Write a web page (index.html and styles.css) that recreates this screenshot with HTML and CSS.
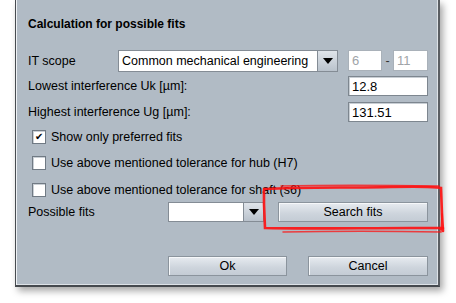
FILE: index.html
```html
<!DOCTYPE html>
<html lang="en">
<head>
    <meta charset="UTF-8">
    <meta name="viewport" content="width=device-width, initial-scale=1.0">
    <title>Calculation for possible fits</title>
    <link rel="stylesheet" href="styles.css">
</head>
<body>
    <div class="dialog">
        <div class="title">Calculation for possible fits</div>

        <div class="row scope-row">
            <span class="label scope-label">IT scope</span>
            <div class="combo scope-combo">
                <span class="combo-value">Common mechanical engineering</span>
                <span class="combo-arrow"></span>
            </div>
            <span class="field small disabled">6</span>
            <span class="dash">-</span>
            <span class="field small wide disabled">11</span>
        </div>

        <div class="row value-row first">
            <span class="label">Lowest interference Uk [µm]:</span>
            <span class="field num">12.8</span>
        </div>
        <div class="row value-row second">
            <span class="label">Highest interference Ug [µm]:</span>
            <span class="field num">131.51</span>
        </div>

        <div class="check-row c1">
            <span class="box checked">&#10004;</span>
            <span>Show only preferred fits</span>
        </div>
        <div class="check-row c2">
            <span class="box"></span>
            <span>Use above mentioned tolerance for hub (H7)</span>
        </div>
        <div class="check-row c3">
            <span class="box"></span>
            <span>Use above mentioned tolerance for shaft (s6)</span>
        </div>

        <div class="row fits-row">
            <span class="label fits-label">Possible fits</span>
            <div class="combo fits-combo">
                <span class="combo-value"></span>
                <span class="combo-arrow"></span>
            </div>
            <button class="btn search">Search fits</button>
        </div>

        <div class="row button-row">
            <button class="btn ok">Ok</button>
            <button class="btn cancel">Cancel</button>
        </div>
    </div>

    <svg class="marker" width="186" height="54" viewBox="0 0 186 54">
        <path d="M4 5 C40 3, 90 4, 130 3 S170 3, 180 4 L181 30 L182 47" />
        <path d="M3 5 L3 20 L4 44 C40 45, 100 44, 150 44 S175 44, 180 45" />
        <path d="M20 2 C60 1, 120 1, 178 2" class="thin" />
        <path d="M22 48 C70 47, 130 47, 180 48 L181 30" class="thin" />
    </svg>
</body>
</html>
```

FILE: styles.css
```css
body {
    margin: 0;
    background: #ffffff;
    font-family: "Liberation Sans", Arial, sans-serif;
    font-size: 12.5px;
    color: #000;
    position: relative;
    height: 303px;
    overflow: hidden;
}
.dialog {
    margin-left: 15px;
    box-sizing: border-box;
    width: 425px;
    height: 287px;
    padding-left: 12px;
    padding-right: 10px;
    background: #b1bbc5;
    border-left: 1px solid #474b50;
    border-right: 2px solid #5a5e63;
    border-bottom: 2px solid #45494e;
    box-shadow: inset 1px 0 0 #eef1f4, inset -1px -1px 0 #dde2e7, 3px 4px 7px rgba(0, 0, 0, 0.35);
}
.title {
    font-weight: bold;
    padding-top: 16px;
    height: 16px;
    line-height: 16px;
    font-size: 12px;
}
.row {
    display: flex;
    align-items: center;
}
.label {
    flex: 1;
    white-space: nowrap;
}
.scope-row {
    margin-top: 18px;
    height: 22px;
}
.scope-label {
    flex: none;
    width: 90px;
}
.combo {
    display: flex;
    height: 100%;
    box-sizing: border-box;
    border: 1px solid #848c95;
    background: #fff;
}
.combo-value {
    flex: 1;
    padding-left: 3px;
    line-height: 20px;
    font-size: 12.5px;
    white-space: nowrap;
    overflow: hidden;
}
.combo-arrow {
    width: 19px;
    border-left: 1px solid #848c95;
    background: linear-gradient(#dfe4ea, #b9c2cc);
    position: relative;
}
.combo-arrow::after {
    content: "";
    position: absolute;
    left: 50%;
    top: 50%;
    margin-left: -5px;
    margin-top: -3px;
    border-left: 5px solid transparent;
    border-right: 5px solid transparent;
    border-top: 6px solid #000;
}
.scope-combo {
    width: 220px;
}
.field {
    box-sizing: border-box;
    height: 100%;
    background: #fff;
    border: 1px solid #7d868f;
    box-shadow: inset 1px 1px 0 #c8ced4;
    padding-left: 3px;
    display: flex;
    align-items: center;
    font-size: 13px;
}
.field.small {
    width: 34px;
    margin-left: 10px;
    height: 21px;
    align-self: flex-start;
}
.field.wide {
    width: 35px;
    margin-left: 0;
}
.field.disabled {
    color: #a0a4a8;
    border-color: #a9b1b9;
    box-shadow: none;
}
.dash {
    width: 11px;
    text-align: center;
    color: #333;
    margin-top: -1px;
}
.value-row {
    height: 20px;
}
.value-row.first {
    margin-top: 4px;
}
.value-row.second {
    margin-top: 6px;
}
.num {
    width: 80px;
}
.check-row {
    display: flex;
    align-items: center;
    height: 20px;
    padding-left: 4px;
    gap: 5px;
}
.c1 { margin-top: 5px; }
.c2 { margin-top: 6px; }
.c3 { margin-top: 7px; }
.box {
    width: 12px;
    height: 12px;
    background: #fff;
    border: 1px solid #707a84;
    box-shadow: inset 1px 1px 0 #c9cfd5;
    display: flex;
    align-items: center;
    justify-content: center;
    font-size: 10px;
    line-height: 12px;
}
.fits-row {
    margin-top: 2px;
    height: 20px;
}
.fits-label {
    flex: none;
    width: 140px;
}
.fits-combo {
    width: 96px;
}
.btn {
    font-family: inherit;
    font-size: 12.5px;
    height: 20px;
    padding: 0;
    border: 1px solid #8b949d;
    background: linear-gradient(#e7ebf0, #cdd4dc 60%, #c4ccd5);
    box-shadow: inset 1px 1px 0 #f6f8fa;
    color: #000;
}
.search {
    width: 150px;
    margin-left: 14px;
}
.button-row {
    margin-top: 34px;
    height: 20px;
    padding-left: 140px;
}
.ok {
    width: 119px;
}
.cancel {
    width: 120px;
    margin-left: 21px;
}
.marker {
    position: absolute;
    left: 261px;
    top: 184px;
}
.marker path {
    fill: none;
    stroke: #ff1010;
    stroke-width: 2.6;
    stroke-linecap: round;
    opacity: 0.9;
}
.marker path.thin {
    stroke-width: 1.5;
    opacity: 0.75;
}
```
